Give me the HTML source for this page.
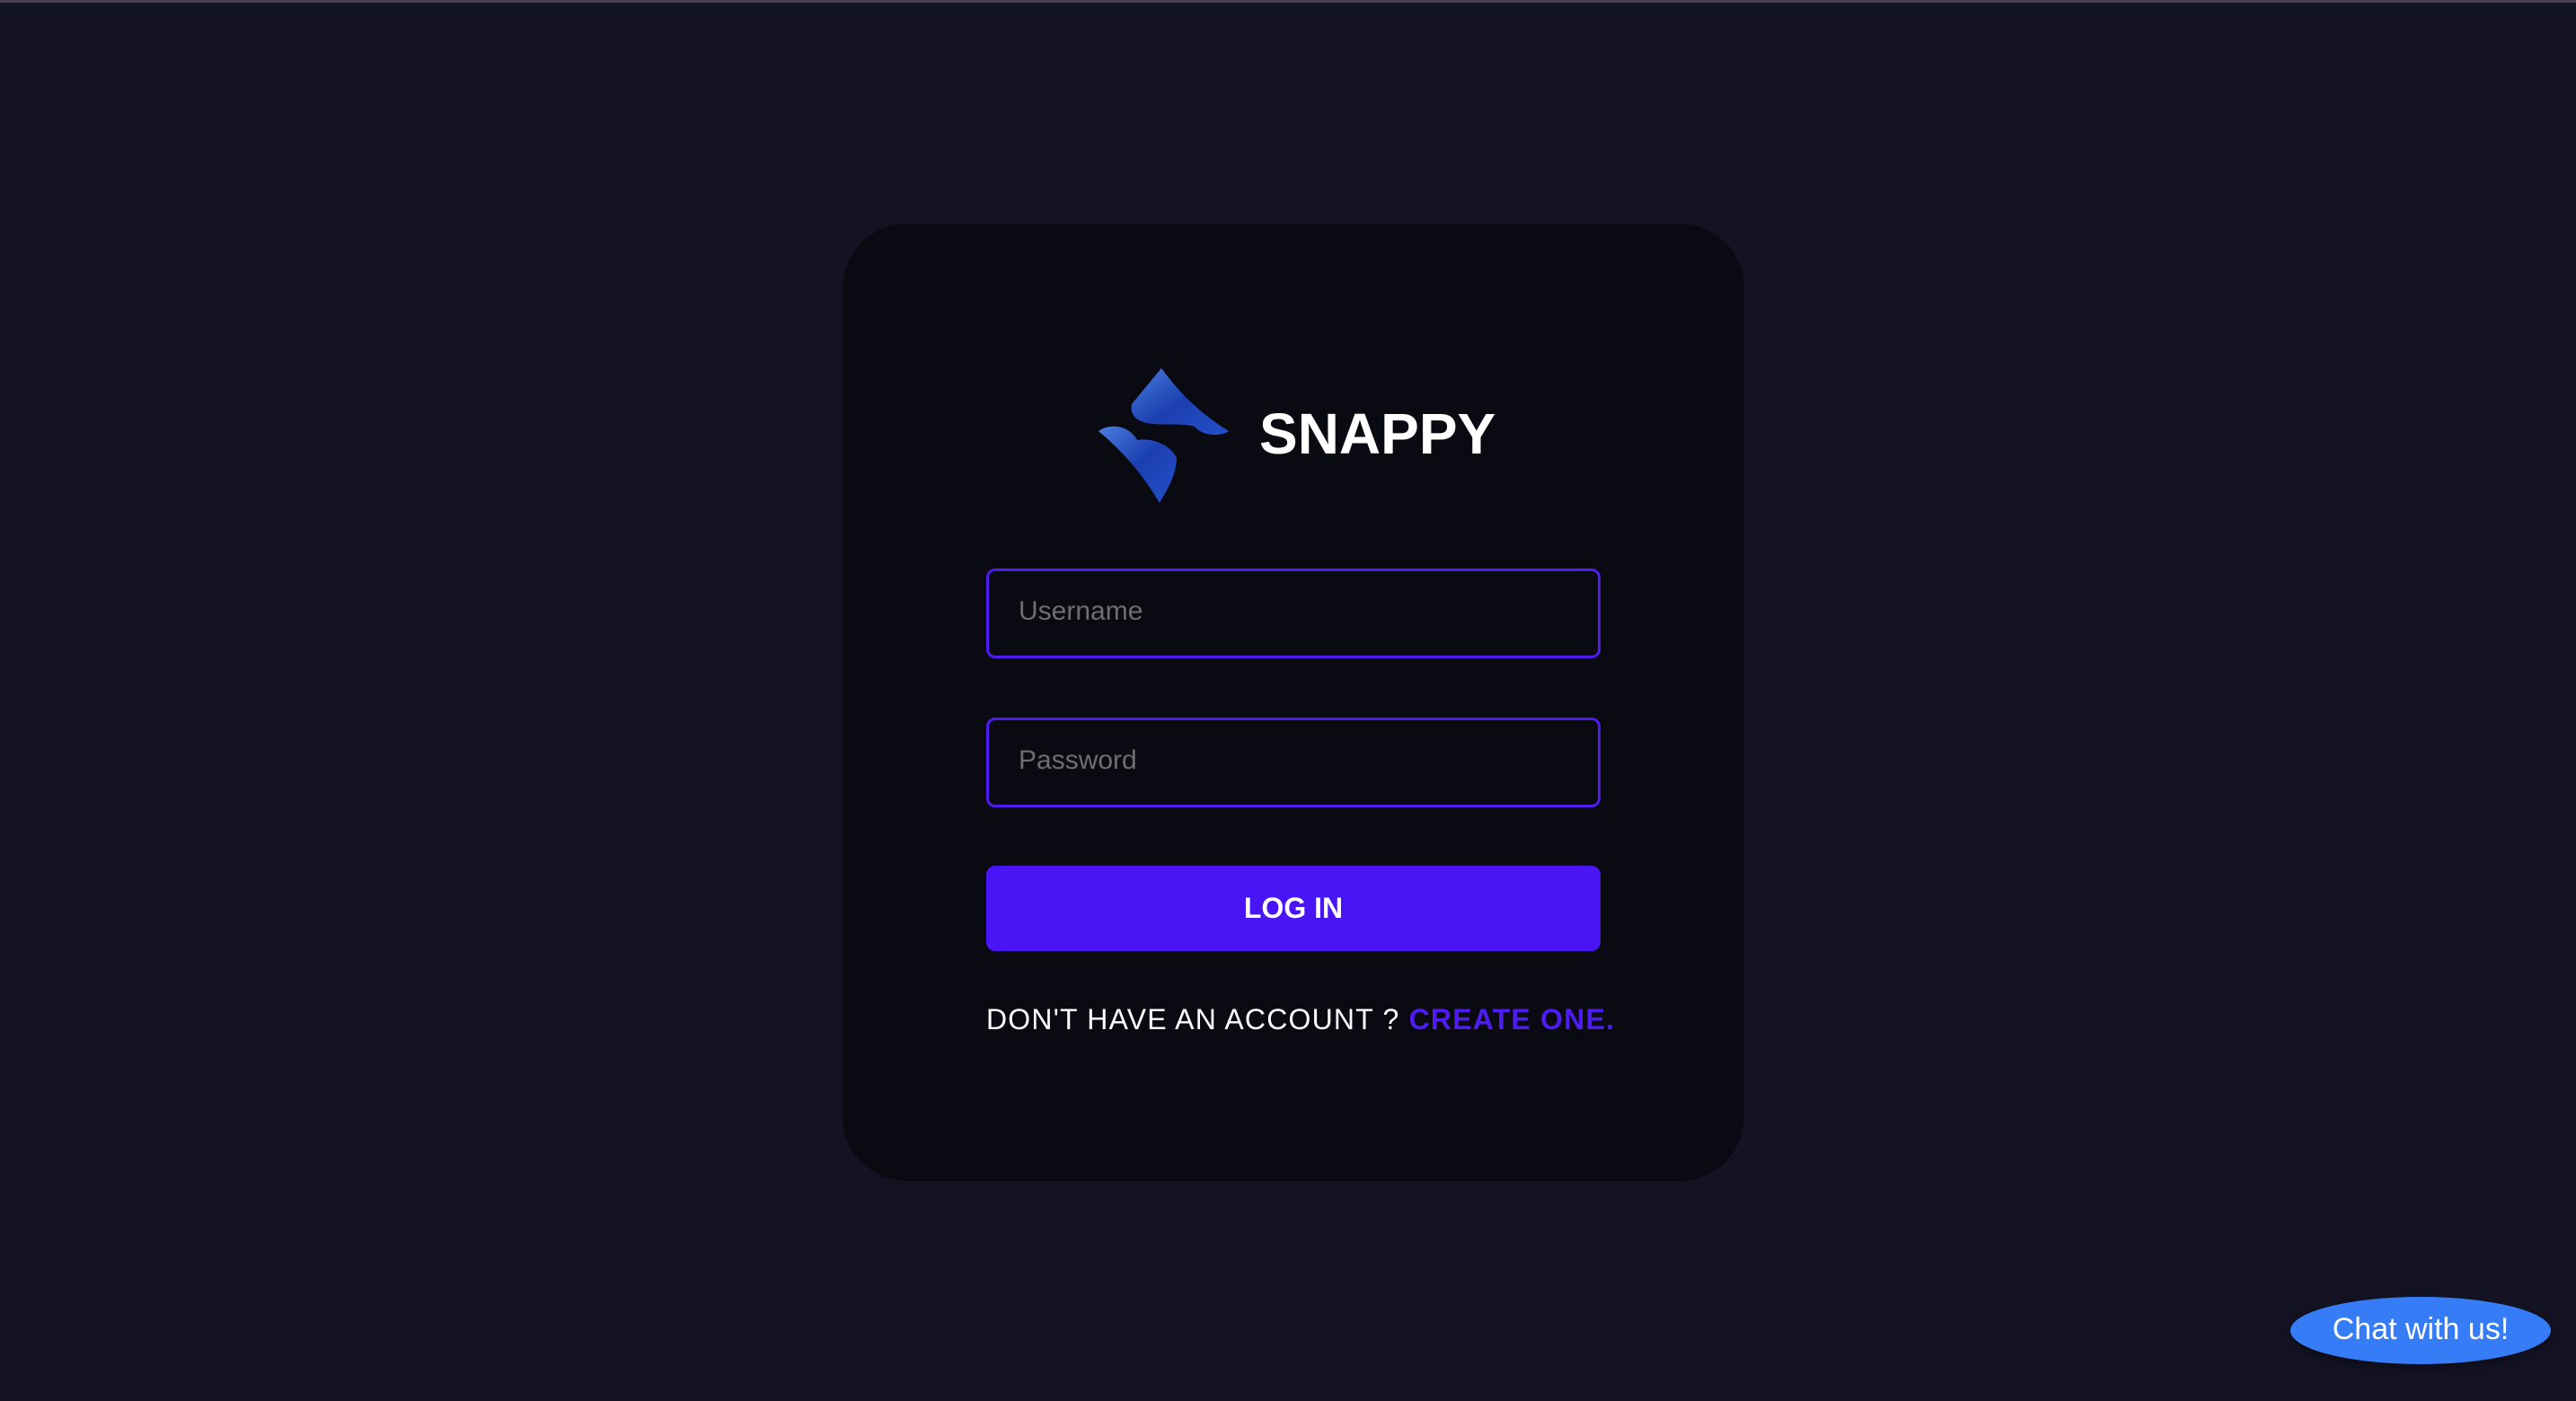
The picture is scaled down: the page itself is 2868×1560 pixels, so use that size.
<!DOCTYPE html>
<html><head><meta charset="utf-8"><style>
html,body{margin:0;padding:0;width:2868px;height:1560px;overflow:hidden;background:#131324;font-family:"Liberation Sans",sans-serif;}
.top{position:absolute;left:0;top:0;width:2868px;height:3px;background:#4b4152;}
.card{position:absolute;left:938px;top:249px;width:1004px;height:1066px;background:#0a0a13;border-radius:72px;}
.inp{position:absolute;left:1098px;width:684px;height:100px;border:3px solid #4e1cf0;border-radius:10px;box-sizing:border-box;}
.ph{position:absolute;left:33px;top:28px;font-size:30px;color:#6e6e6e;}
.btn{position:absolute;left:1098px;top:964px;width:684px;height:95px;background:#4a15f5;border-radius:10px;color:#fff;font-weight:bold;font-size:32px;text-align:center;line-height:95px;}
.sig{position:absolute;left:1098px;top:1117px;width:700px;font-size:32px;color:#fff;white-space:nowrap;letter-spacing:1.2px;}
.sig b{color:#4e1cf0;}
.brand{position:absolute;left:1402px;top:446px;font-size:64px;font-weight:bold;color:#fff;letter-spacing:0px;}
.chat{position:absolute;left:2550px;top:1444px;width:290px;height:75px;border-radius:50%;background:#367cf6;color:#fff;font-size:34px;text-align:center;line-height:72px;box-shadow:0 4px 10px rgba(0,0,0,.4);}
</style></head><body>
<div class="top"></div>
<div class="card"></div>
<svg style="position:absolute;left:1218px;top:405px" width="155" height="160" viewBox="0 0 155 160">
<defs><linearGradient id="g" x1="0" y1="0" x2="1" y2="1"><stop offset="0" stop-color="#4a7fe0"/><stop offset=".5" stop-color="#1c3fb0"/><stop offset="1" stop-color="#2450c8"/></linearGradient></defs>
<path d="M75 5 C90 25 110 50 150 75 C140 82 120 80 112 70 C95 65 70 70 55 65 C45 62 40 55 42 45 Z" fill="url(#g)"/>
<path d="M5 75 C20 65 40 70 48 85 C65 82 85 90 92 105 C92 120 85 135 73 155 C55 125 35 100 5 75 Z" fill="url(#g)"/>
</svg>
<div class="brand">SNAPPY</div>
<div class="inp" style="top:633px"><div class="ph">Username</div></div>
<div class="inp" style="top:799px"><div class="ph">Password</div></div>
<div class="btn">LOG IN</div>
<div class="sig">DON'T HAVE AN ACCOUNT ? <b>CREATE ONE.</b></div>
<div class="chat">Chat with us!</div>
</body></html>
